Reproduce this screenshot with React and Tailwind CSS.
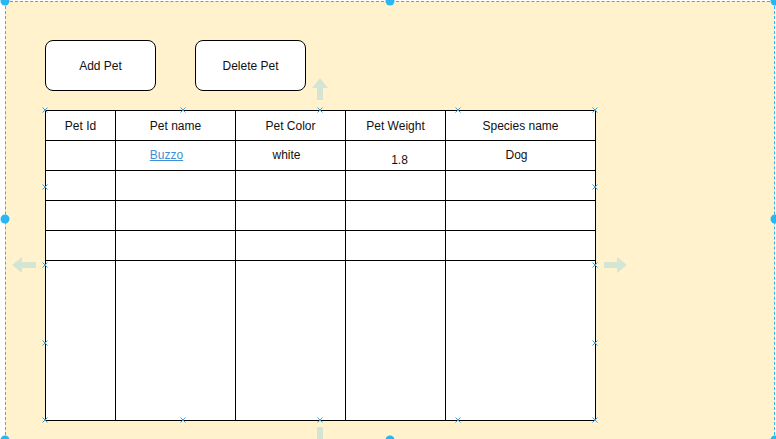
import React from "react";

const cols = ["Pet Id", "Pet name", "Pet Color", "Pet Weight", "Species name"];

const emptyRows = [1, 2, 3];

// small blue "x" connection points on the table edge
const points = [
  [45, 110], [183, 110], [320, 110], [458, 110], [595, 110],
  [45, 187], [595, 187], [45, 265], [595, 265], [45, 343], [595, 343],
  [45, 420], [183, 420], [320, 420], [458, 420], [595, 420],
];

const dots = [
  [5, 1], [390, 1], [775, 1], [5, 219], [775, 219], [5, 440], [390, 440], [775, 440],
];

function Overlay() {
  return (
    <svg
      className="absolute inset-0 pointer-events-none"
      width="776"
      height="439"
      viewBox="0 0 776 439"
    >
      {/* hover arrows */}
      <g fill="#29b6f2" opacity="0.2">
        <path d="M320 78 L328 88 L323 88 L323 100 L317 100 L317 88 L312 88 Z" />
        <path d="M12 265 L22 257 L22 262 L36 262 L36 268 L22 268 L22 273 Z" />
        <path d="M627 265 L617 257 L617 262 L604 262 L604 268 L617 268 L617 273 Z" />
        <path d="M317 427 L323 427 L323 439 L317 439 Z" />
      </g>
      {/* connection points */}
      <g stroke="#3a9fd6" strokeWidth="1">
        {points.map(([x, y], i) => (
          <g key={i}>
            <line x1={x - 2.5} y1={y - 2.5} x2={x + 2.5} y2={y + 2.5} />
            <line x1={x - 2.5} y1={y + 2.5} x2={x + 2.5} y2={y - 2.5} />
          </g>
        ))}
      </g>
      {/* resize handles */}
      <g fill="#29b6f2">
        {dots.map(([x, y], i) => (
          <circle key={i} cx={x} cy={y} r="4.5" />
        ))}
      </g>
    </svg>
  );
}

const cell = "border-r border-b border-black flex items-center justify-center";

export default function App() {
  return (
    <div
      className="relative w-[776px] h-[439px] overflow-hidden bg-white text-[12px] text-[#111]"
      style={{ fontFamily: '"Liberation Sans", Arial, sans-serif' }}
    >
      <div className="ml-[5px] mt-[1px] w-[770px] h-[439px] bg-[#fff2cc] border border-dashed border-[#29b6f2] pl-[39px] pt-[38px]">
        {/* BUTTONS */}
        <div className="flex gap-[39px]">
          <button className="w-[111px] h-[51px] rounded-[8px] border border-black bg-white">
            Add Pet
          </button>
          <button className="w-[111px] h-[51px] rounded-[8px] border border-black bg-white">
            Delete Pet
          </button>
        </div>

        {/* TABLE */}
        <div className="mt-[19px] w-[551px] bg-white border-l border-t border-black grid grid-cols-[70px_120px_110px_100px_150px] grid-rows-[30px_30px_30px_30px_30px_160px]">
          {cols.map((c) => (
            <div key={c} className={`${cell} pt-[1px]`}>{c}</div>
          ))}

          <div className={cell}></div>
          <div className={`${cell} pr-[18px] pb-[1px]`}>
            <span className="text-[#3d8fd6] underline">Buzzo</span>
          </div>
          <div className={`${cell} pr-[8px] pb-[1px]`}>white</div>
          <div className={`${cell} pl-[8px] pt-[8px]`}>1.8</div>
          <div className={`${cell} pr-[8px] pb-[1px]`}>Dog</div>

          {emptyRows.map((r) =>
            cols.map((c) => <div key={`${r}-${c}`} className={cell}></div>)
          )}

          {cols.map((c) => (
            <div key={`last-${c}`} className={cell}></div>
          ))}
        </div>
      </div>

      <Overlay />
    </div>
  );
}
